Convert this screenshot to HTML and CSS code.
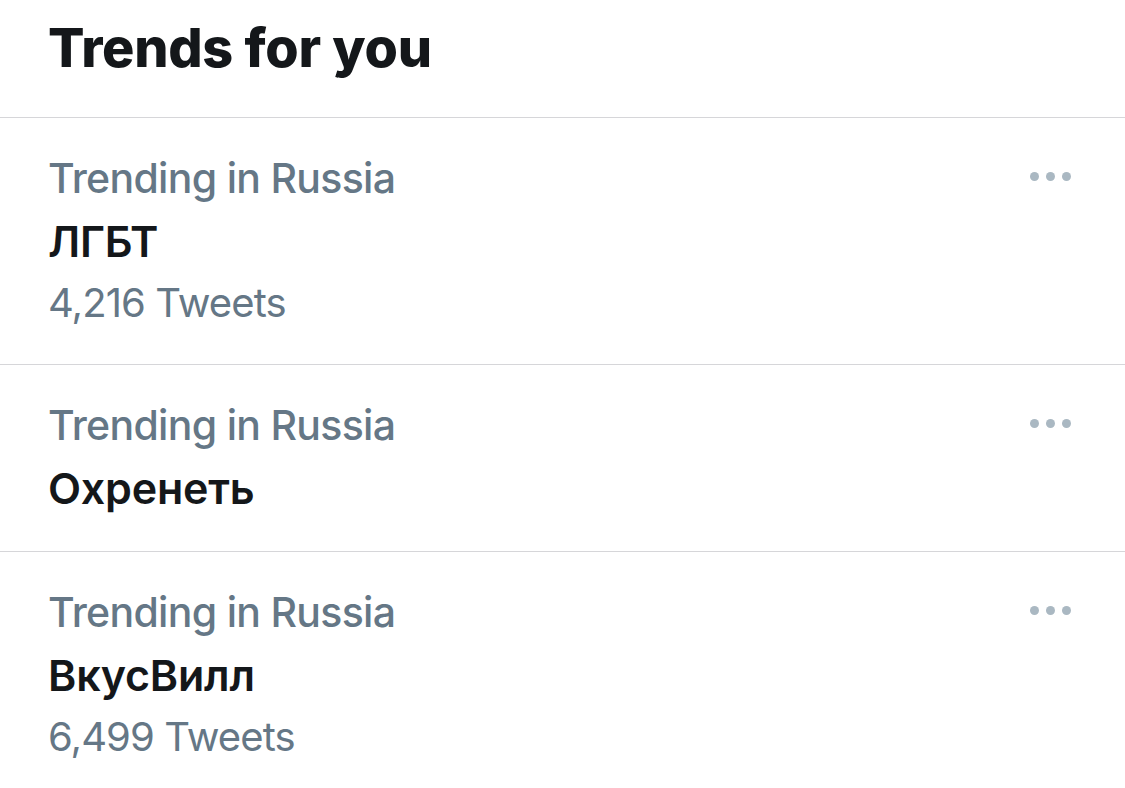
FILE: index.html
```html
<!DOCTYPE html>
<html lang="en">
<head>
    <meta charset="UTF-8">
    <meta name="viewport" content="width=device-width, initial-scale=1.0">
    <title>Trends for you</title>
    <link rel="stylesheet" href="styles.css">
</head>
<body>
    <div class="panel">
        <h1 class="panel-title">Trends for you</h1>

        <div class="trend">
            <div class="trend-info">
                <div class="trend-meta">Trending in Russia</div>
                <div class="trend-name">ЛГБТ</div>
                <div class="trend-count">4,216 Tweets</div>
            </div>
            <button class="more-button" type="button" aria-label="More">
                <span class="dot"></span><span class="dot"></span><span class="dot"></span>
            </button>
        </div>

        <div class="trend">
            <div class="trend-info">
                <div class="trend-meta">Trending in Russia</div>
                <div class="trend-name">Охренеть</div>
            </div>
            <button class="more-button" type="button" aria-label="More">
                <span class="dot"></span><span class="dot"></span><span class="dot"></span>
            </button>
        </div>

        <div class="trend">
            <div class="trend-info">
                <div class="trend-meta">Trending in Russia</div>
                <div class="trend-name">ВкусВилл</div>
                <div class="trend-count">6,499 Tweets</div>
            </div>
            <button class="more-button" type="button" aria-label="More">
                <span class="dot"></span><span class="dot"></span><span class="dot"></span>
            </button>
        </div>
    </div>
</body>
</html>
```

FILE: styles.css
```css
body {
    font-family: Inter, "Noto Sans", Arial, sans-serif;
    margin: 0;
    padding: 0;
    background-color: #ffffff;
    color: #14171a;
}
.panel {
    width: 100%;
}
.panel-title {
    margin: 0;
    height: 117px;
    padding-left: 48px;
    font-size: 54px;
    font-weight: 800;
    line-height: 96px;
    letter-spacing: -0.3px;
    border-bottom: 1px solid #d6d6d9;
}
.trend {
    display: flex;
    justify-content: space-between;
    align-items: flex-start;
    padding: 29px 54px 31px 48px;
    border-bottom: 1px solid #d6d6d9;
}
.trend-meta {
    font-size: 41px;
    font-weight: 500;
    line-height: 62px;
    letter-spacing: -0.7px;
    color: #657786;
}
.trend-name {
    font-size: 43px;
    font-weight: 600;
    line-height: 64px;
    letter-spacing: -0.2px;
}
.trend-count {
    font-size: 40px;
    font-weight: 400;
    line-height: 60px;
    letter-spacing: -0.9px;
    color: #657786;
}
/* three grey dots in the row corner */
.more-button {
    display: flex;
    gap: 7px;
    margin-top: 25px;
    padding: 0;
    border: none;
    background: none;
    cursor: pointer;
}
.dot {
    width: 9px;
    height: 9px;
    border-radius: 50%;
    background-color: #aab8c2;
}
```
